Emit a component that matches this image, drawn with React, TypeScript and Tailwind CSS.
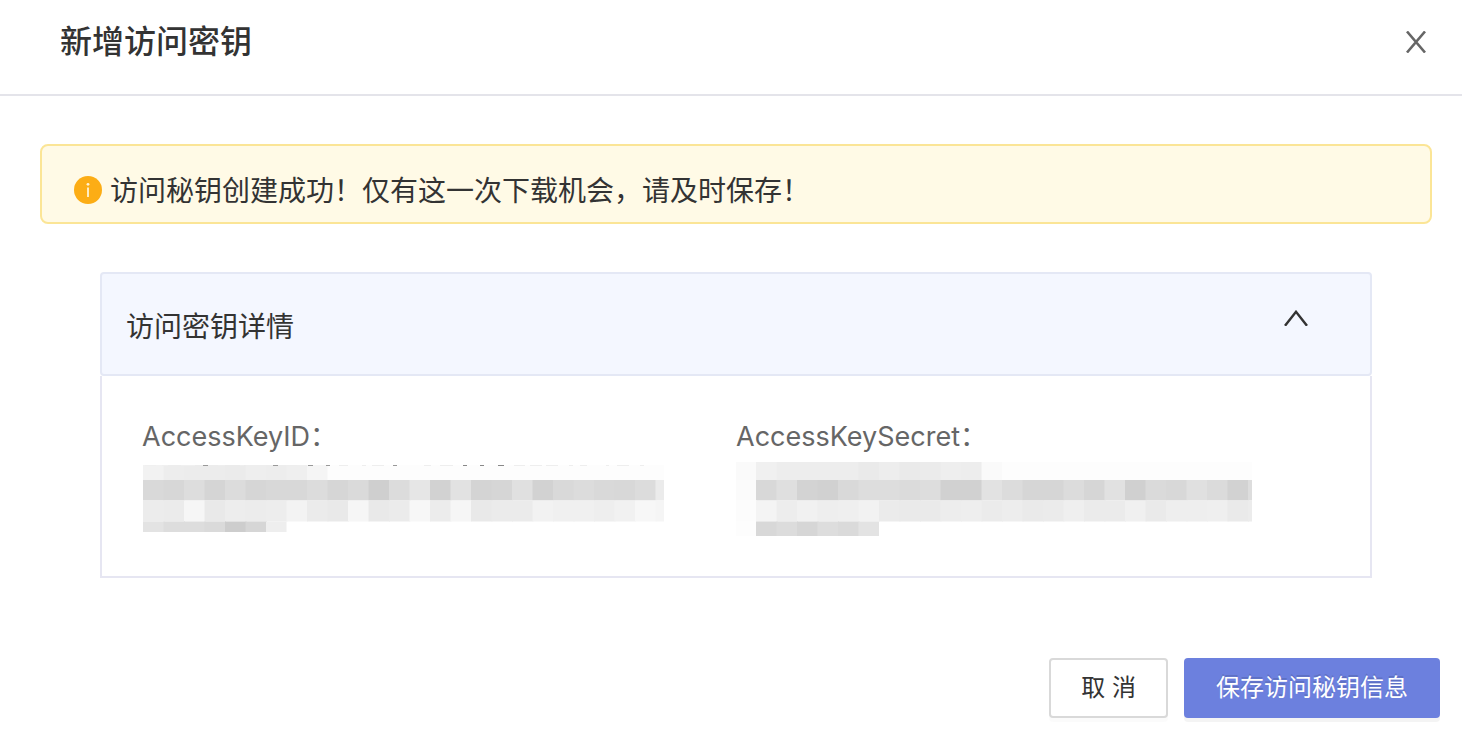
import { useState } from "react";

const CELL = 20.5;

type Row = { y: number; h: number; shades: string };

const keyIdRows: Row[] = [
  { y: 3, h: 15, shades: "f2 ed ec ec eb ee ed ef f5 fd fd fd fd fd fd fd fd fd fd fd fd fd fd fd fd fd" },
  { y: 18, h: 20.5, shades: "d9 d7 dd d5 dc d6 d8 d8 dc d6 da cf dc e6 d2 e2 d4 d6 e0 d2 d9 dc d9 d8 dc eb" },
  { y: 38.5, h: 21, shades: "ec eb f6 e9 ed ec ed f3 eb e9 f6 e9 eb f7 ec f6 e9 eb eb f2 f0 f0 ee f1 f7 f5" },
  { y: 59.5, h: 10.5, shades: "e3 dd dd da cd d6 ee" },
];

const secretRows: Row[] = [
  { y: 0, h: 18, shades: "fa f0 ed ed ed ed ea ed ea eb ee ed fa fd fd fd fd fd fd fd fd fd fd fd fd fd" },
  { y: 18, h: 20.5, shades: "fb d8 df d3 d1 d9 dd dd db dd d1 d1 e2 dc d6 d6 dc d6 e1 d0 da d8 e0 db d2 dd" },
  { y: 38.5, h: 21, shades: "fc f4 ed f1 ee ef f2 eb ea ea ed ee eb ed ea eb ef eb eb f0 ea ee ee ef ea ec" },
  { y: 59.5, h: 14.5, shades: "fd d8 dc d6 dd da e3" },
];

const tips: [number, number, string][] = [
  [3, 11, "#f0f0f0"], [20, 6, "#f0f0f0"], [39, 14, "#f0f0f0"], [61, 5, "#999"], [76, 7, "#eee"],
  [98, 4, "#eee"], [108, 4, "#eee"], [131, 5, "#999"], [145, 10, "#eee"], [166, 5, "#999"],
  [184, 4, "#999"], [197, 9, "#eee"], [220, 4, "#eee"], [230, 12, "#eee"], [251, 4, "#999"],
  [282, 7, "#eee"], [298, 13, "#eee"], [321, 4, "#888"], [338, 4, "#888"], [356, 6, "#888"],
  [372, 11, "#eee"], [388, 12, "#eee"], [404, 12, "#eee"], [427, 4, "#eee"],
  [438, 7, "#eee"], [464, 3, "#eee"], [475, 12, "#eee"], [498, 4, "#eee"],
];

function Mosaic({ rows, origin, width, label, marks = [] }: {
  rows: Row[];
  origin: number;
  width: number;
  label: string;
  marks?: [number, number, string][];
}) {
  return (
    <svg className="block shrink-0" width={width} height={74} viewBox={`0 0 ${width} 74`} role="img" aria-label={label}>
      {rows.map((row) => {
        const shades = row.shades.split(" ");
        return shades.map((s, i) => (
          <rect
            key={`${row.y}-${i}`}
            x={origin + i * CELL}
            y={row.y}
            width={i < shades.length - 1 ? CELL + 1 : CELL}
            height={row.h}
            fill={`#${s}${s}${s}`}
          />
        ));
      })}
      {marks.map(([x, w, fill]) => (
        <rect key={x} x={x} y={3} width={w} height={1} fill={fill} />
      ))}
    </svg>
  );
}

export default function App() {
  const [open, setOpen] = useState(true);
  return (
    <div className="min-h-screen bg-white font-['Inter','Noto_Sans_CJK_SC',sans-serif] text-[#333]">
      <header className="flex h-24 items-start justify-between border-b-2 border-[#e4e4ea] pt-4 pr-[30px] pl-[60px]">
        <h1 className="text-[32px] leading-[52px] font-medium">新增访问密钥</h1>
        <button type="button" aria-label="关闭" className="mt-2.5 flex size-8 items-center justify-center text-[#666]">
          <svg width="20" height="22" viewBox="0 0 20 22" fill="none" stroke="currentColor" strokeWidth="2.6">
            <path d="M1 .5 19 21.5M19 .5 1 21.5" />
          </svg>
        </button>
      </header>

      <main className="pt-12 pr-[30px] pl-10">
        <div role="alert" className="flex h-20 items-center gap-2 rounded-lg border-2 border-[#fbe596] bg-[#fffae6] pt-3 pl-8">
          <svg width="28" height="28" viewBox="0 0 28 28" className="shrink-0">
            <circle cx="14" cy="14" r="14" fill="#fcad15" />
            <circle cx="14" cy="8.3" r="1.4" fill="#fff4d6" />
            <path d="M13.1 11.5h1.8V21h-1.8z" fill="#fff4d6" />
          </svg>
          <p className="pt-0.5 text-[28px] leading-10">访问秘钥创建成功！仅有这一次下载机会，请及时保存！</p>
        </div>

        <section className="mt-12 mr-[60px] ml-[60px]">
          <h2>
            <button
              type="button"
              aria-expanded={open}
              onClick={() => setOpen(!open)}
              className="flex h-[104px] w-full items-center justify-between rounded border-2 border-[#e4e8f5] bg-[#f4f7ff] pr-[62px] pl-6 text-left"
            >
              <span className="pt-1.5 text-[28px] leading-10">访问密钥详情</span>
              <svg width="24" height="16" viewBox="0 0 24 16" fill="none" stroke="#333" strokeWidth="2.4" className={open ? "mb-3" : "mb-3 rotate-180"}>
                <path d="M1 15.8 12 1.8l11 14" />
              </svg>
            </button>
          </h2>
          {open && (
            <dl className="grid grid-cols-[594px_1fr] border-x-2 border-b-2 border-[#e6e6f2] pt-10 pb-10 pl-10 text-[27px] leading-[42px] text-[#666]">
              <div>
                <dt>AccessKeyID：</dt>
                <dd className="pt-1">
                  <Mosaic rows={keyIdRows} origin={1} width={522} label="AccessKeyID" marks={tips} />
                </dd>
              </div>
              <div>
                <dt>AccessKeySecret：</dt>
                <dd className="pt-1">
                  <Mosaic rows={secretRows} origin={-0.5} width={516} label="AccessKeySecret" />
                </dd>
              </div>
            </dl>
          )}
        </section>
      </main>

      <footer className="flex justify-end gap-4 pt-20 pr-[22px] pb-7 text-[24px] leading-9">
        <button type="button" className="h-[60px] rounded border-2 border-[#d9d9d9] bg-white px-[30px] shadow-[0_4px_0_rgba(0,0,0,0.016)]">
          取 消
        </button>
        <button type="button" className="h-[60px] rounded bg-[#6c80de] px-8 text-white shadow-[0_4px_0_rgba(0,0,0,0.045)] [text-shadow:0_-2px_0_rgba(0,0,0,0.12)]">
          保存访问秘钥信息
        </button>
      </footer>
    </div>
  );
}
